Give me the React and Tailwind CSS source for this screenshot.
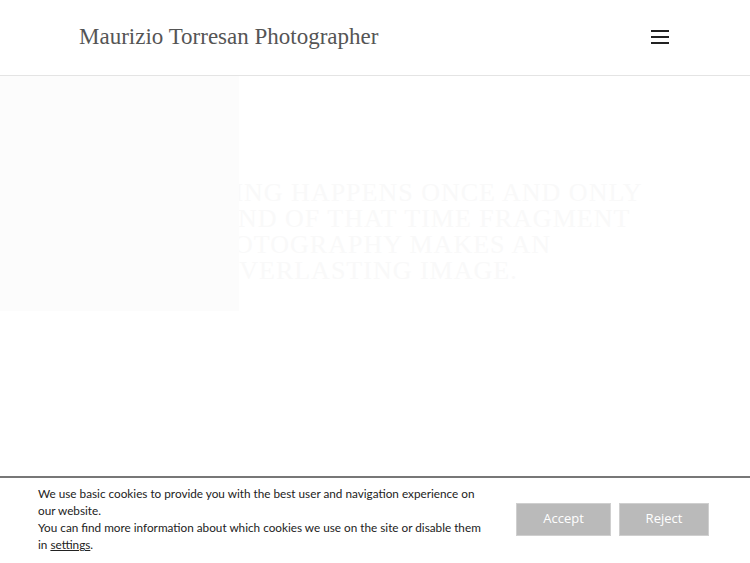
export default function App() {
  return (
    <div className="h-[563px] w-[750px] bg-white flex flex-col overflow-hidden">
      <header className="h-[76px] shrink-0 border-b border-[#e4e4e4] flex items-center justify-between pl-[79px] pr-[81px]">
        <div className="text-[23px] text-[#555] leading-none pb-[3px]" style={{ fontFamily: '"Liberation Serif", serif' }}>
          Maurizio Torresan Photographer
        </div>
        <button className="w-[18px] h-[14px] flex flex-col justify-between mb-[2px]">
          <span className="block h-[2px] w-full bg-[#222]" />
          <span className="block h-[2px] w-full bg-[#222]" />
          <span className="block h-[2px] w-full bg-[#222]" />
        </button>
      </header>
      <section className="relative h-[235px] shrink-0">
        <div
          className="pt-[104px] text-center text-[26px] leading-[26px] tracking-[1px] text-[#f9f9f9] uppercase"
          style={{ fontFamily: '"Liberation Serif", serif' }}
        >
          <div>Everything happens once and only</div>
          <div>at the end of that time fragment</div>
          <div>photography makes an</div>
          <div className="pr-[10px]">everlasting image.</div>
        </div>
        <div className="absolute left-0 top-0 h-full w-[239px] bg-[#fcfcfc]" />
      </section>
      <div className="flex-1" />
      <div className="shrink-0 h-[87px] border-t-2 border-[#777] bg-white flex items-center pl-[38px] pr-[41px]" style={{ fontFamily: 'Lato, sans-serif' }}>
        <p className="w-[455px] text-[11.75px] leading-[17px] text-[#222] pb-[3px]">
          We use basic cookies to provide you with the best user and navigation experience on our website.
          <br />
          You can find more information about which cookies we use on the site or disable them in <u>settings</u>.
        </p>
        <div className="ml-auto flex gap-[8px] pb-[3px]" style={{ fontFamily: '"Open Sans", sans-serif' }}>
          <button className="w-[95px] h-[33px] bg-[#bababa] border border-[#cfcfcf] text-white text-[13px]">Accept</button>
          <button className="w-[90px] h-[33px] bg-[#bababa] border border-[#cfcfcf] text-white text-[13px]">Reject</button>
        </div>
      </div>
    </div>
  );
}
